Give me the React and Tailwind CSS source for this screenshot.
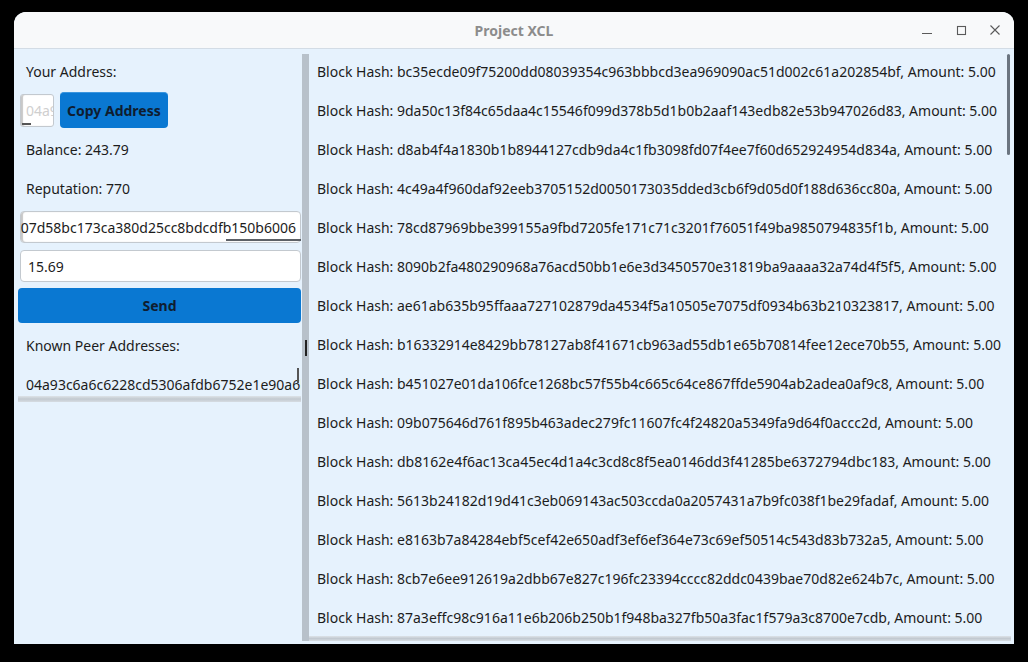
import React from "react";

const hashes = [
  "bc35ecde09f75200dd08039354c963bbbcd3ea969090ac51d002c61a202854bf",
  "9da50c13f84c65daa4c15546f099d378b5d1b0b2aaf143edb82e53b947026d83",
  "d8ab4f4a1830b1b8944127cdb9da4c1fb3098fd07f4ee7f60d652924954d834a",
  "4c49a4f960daf92eeb3705152d0050173035dded3cb6f9d05d0f188d636cc80a",
  "78cd87969bbe399155a9fbd7205fe171c71c3201f76051f49ba9850794835f1b",
  "8090b2fa480290968a76acd50bb1e6e3d3450570e31819ba9aaaa32a74d4f5f5",
  "ae61ab635b95ffaaa727102879da4534f5a10505e7075df0934b63b210323817",
  "b16332914e8429bb78127ab8f41671cb963ad55db1e65b70814fee12ece70b55",
  "b451027e01da106fce1268bc57f55b4c665c64ce867ffde5904ab2adea0af9c8",
  "09b075646d761f895b463adec279fc11607fc4f24820a5349fa9d64f0accc2d",
  "db8162e4f6ac13ca45ec4d1a4c3cd8c8f5ea0146dd3f41285be6372794dbc183",
  "5613b24182d19d41c3eb069143ac503ccda0a2057431a7b9fc038f1be29fadaf",
  "e8163b7a84284ebf5cef42e650adf3ef6ef364e73c69ef50514c543d83b732a5",
  "8cb7e6ee912619a2dbb67e827c196fc23394cccc82ddc0439bae70d82e624b7c",
  "87a3effc98c916a11e6b206b250b1f948ba327fb50a3fac1f579a3c8700e7cdb",
];

export default function App() {
  return (
    <div
      className="w-[1028px] h-[662px] bg-black pt-[12px] pl-[14px] overflow-hidden text-[#1c1c1c]"
      style={{ fontFamily: '"Noto Sans", "Open Sans", sans-serif' }}
    >
      <div className="w-[1000px] h-[632px] rounded-t-[12px] overflow-hidden flex flex-col bg-[#e6f2fd]">
        {/* Title bar */}
        <div className="relative h-[37px] shrink-0 bg-[#f8f9fa] border-b border-[#d3dce5] flex items-center justify-center">
          <span className="text-[14px] font-bold text-[#8c8c8c]">Project XCL</span>
          <div className="absolute right-0 top-0 h-full flex items-center">
            <div className="w-[34px] flex justify-center">
              <svg width="12" height="12" viewBox="0 0 12 12">
                <line x1="1" y1="9.5" x2="11" y2="9.5" stroke="#5a5a5a" strokeWidth="1.1" />
              </svg>
            </div>
            <div className="w-[34px] flex justify-center">
              <svg width="12" height="12" viewBox="0 0 12 12">
                <rect x="2.5" y="2.5" width="8" height="8" fill="none" stroke="#5a5a5a" strokeWidth="1.1" />
              </svg>
            </div>
            <div className="w-[34px] flex justify-center mr-[2px]">
              <svg width="12" height="12" viewBox="0 0 12 12">
                <path d="M1.5 1.5 L10.5 10.5 M10.5 1.5 L1.5 10.5" stroke="#5a5a5a" strokeWidth="1.1" />
              </svg>
            </div>
          </div>
        </div>

        {/* Body */}
        <div className="flex flex-1 min-h-0">
          {/* Left panel */}
          <div className="w-[288px] shrink-0 flex flex-col pt-[5px] text-[14px]">
            <div className="h-[34px] flex items-center pl-[12px]">Your Address:</div>
            <div className="h-[36px] mt-[4px] flex items-center pl-[6px] gap-[6px]">
              <div className="relative w-[34px] h-[33px] bg-white border border-[#c3c9cf] rounded-[3px] shadow-[inset_2px_0_1px_#c8c8c8] overflow-hidden flex items-center pl-[5px]">
                <span className="text-[#cfcfcf] whitespace-nowrap">04a9</span>
                <div className="absolute left-[1px] bottom-[1px] w-[9px] h-[2px] bg-[#555]" />
              </div>
              <button className="h-[36px] px-[7px] rounded-[4px] bg-[#0a78d2] border-t border-[#3a95de] font-bold text-[14px] text-[#0f1d30]">
                Copy Address
              </button>
            </div>
            <div className="h-[39px] mt-[2px] flex items-center pl-[12px]">Balance: 243.79</div>
            <div className="h-[39px] flex items-center pl-[12px]">Reputation: 770</div>
            <div className="relative h-[32px] mt-[3px] ml-[6px] mr-[1px] bg-white border border-[#c3c9cf] rounded-[4px] shadow-[inset_2px_0_1px_#c8c8c8] flex items-center justify-end pr-[4px]">
              <span className="whitespace-nowrap">07d58bc173ca380d25cc8bdcdfb150b6006</span>
              <div className="absolute right-[-1px] bottom-[1px] w-[75px] h-[2px] bg-[#5c6066]" />
            </div>
            <div className="h-[32px] mt-[7px] ml-[6px] mr-[1px] bg-white border border-[#c3c9cf] rounded-[4px] flex items-center pl-[7px]">
              15.69
            </div>
            <button className="h-[35px] mt-[6px] ml-[4px] mr-[1px] rounded-[4px] bg-[#0a78d2] font-bold text-[14px] text-[#0f1d30]">
              Send
            </button>
            <div className="h-[38px] mt-[3px] flex items-center pl-[12px]">Known Peer Addresses:</div>
            <div className="relative h-[38px] ml-[4px] mr-[1px] overflow-hidden flex flex-col">
              <div className="pt-[11px] pl-[8px] leading-[20px] whitespace-nowrap">
                04a93c6a6c6228cd5306afdb6752e1e90a6b2
              </div>
              <div className="absolute right-[2px] top-[4px] w-[2px] h-[15px] bg-[#555]" />
              <div className="mt-[1px] h-[6px] bg-gradient-to-b from-[#dde3e8] via-[#c2c9d0] to-[#d6dce2]" />
            </div>
          </div>

          {/* Right side */}
          <div className="flex-1 flex pt-[5px] pb-[3px] pr-[3px] min-w-0">
            <div className="relative w-[7px] shrink-0 bg-[#b8c1ca]">
              <div className="absolute left-[3px] top-[286px] w-[1.5px] h-[16px] bg-[#222]" />
            </div>
            <div className="relative flex-1 min-w-0 flex flex-col overflow-hidden">
              <div className="flex-1 overflow-hidden">
                <div className="-mt-[2px]">
                  {hashes.map((h, i) => (
                    <div key={i} className="h-[39px] flex items-center pl-[8px] text-[14px] whitespace-nowrap">
                      Block Hash: {h}, Amount: 5.00
                    </div>
                  ))}
                </div>
              </div>
              <div className="h-[5px] shrink-0 bg-gradient-to-b from-[#dde3e8] via-[#c2c9d0] to-[#d6dce2]" />
              <div className="absolute right-[1px] top-0 w-[3px] h-[101px] rounded-full bg-[#6b7580]" />
            </div>
          </div>
        </div>
      </div>
    </div>
  );
}
